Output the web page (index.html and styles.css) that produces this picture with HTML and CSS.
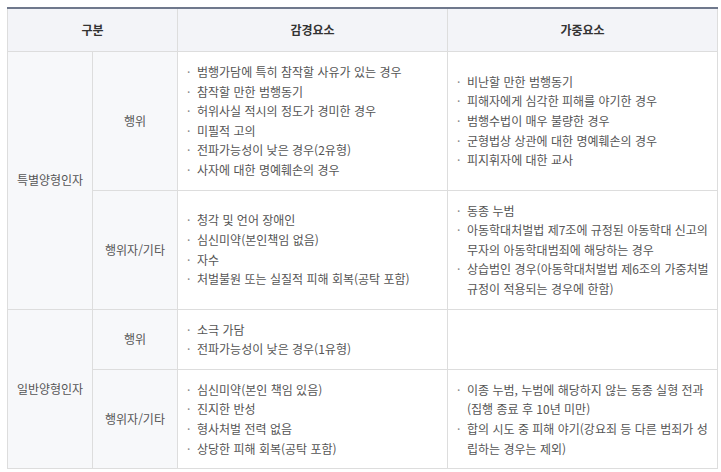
FILE: index.html
```html
<!DOCTYPE html>
<html lang="ko">
<head>
<meta charset="utf-8">
<title>양형인자</title>
<link rel="stylesheet" href="styles.css">
</head>
<body>
<table class="factors">
  <colgroup>
    <col class="c-group">
    <col class="c-type">
    <col class="c-mit">
    <col class="c-agg">
  </colgroup>
  <thead>
    <tr>
      <th colspan="2">구분</th>
      <th>감경요소</th>
      <th>가중요소</th>
    </tr>
  </thead>
  <tbody>
    <tr>
      <td class="label" rowspan="2">특별양형인자</td>
      <td class="label">행위</td>
      <td>
        <ul class="items">
          <li>범행가담에 특히 참작할 사유가 있는 경우</li>
          <li>참작할 만한 범행동기</li>
          <li>허위사실 적시의 정도가 경미한 경우</li>
          <li>미필적 고의</li>
          <li>전파가능성이 낮은 경우(2유형)</li>
          <li>사자에 대한 명예훼손의 경우</li>
        </ul>
      </td>
      <td>
        <ul class="items">
          <li>비난할 만한 범행동기</li>
          <li>피해자에게 심각한 피해를 야기한 경우</li>
          <li>범행수법이 매우 불량한 경우</li>
          <li>군형법상 상관에 대한 명예훼손의 경우</li>
          <li>피지휘자에 대한 교사</li>
        </ul>
      </td>
    </tr>
    <tr>
      <td class="label">행위자/기타</td>
      <td>
        <ul class="items">
          <li>청각 및 언어 장애인</li>
          <li>심신미약(본인책임 없음)</li>
          <li>자수</li>
          <li>처벌불원 또는 실질적 피해 회복(공탁 포함)</li>
        </ul>
      </td>
      <td>
        <ul class="items">
          <li>동종 누범</li>
          <li>아동학대처벌법 제7조에 규정된 아동학대 신고의<br>무자의 아동학대범죄에 해당하는 경우</li>
          <li>상습범인 경우(아동학대처벌법 제6조의 가중처벌<br>규정이 적용되는 경우에 한함)</li>
        </ul>
      </td>
    </tr>
    <tr>
      <td class="label" rowspan="2">일반양형인자</td>
      <td class="label">행위</td>
      <td>
        <ul class="items">
          <li>소극 가담</li>
          <li>전파가능성이 낮은 경우(1유형)</li>
        </ul>
      </td>
      <td></td>
    </tr>
    <tr>
      <td class="label">행위자/기타</td>
      <td>
        <ul class="items">
          <li>심신미약(본인 책임 있음)</li>
          <li>진지한 반성</li>
          <li>형사처벌 전력 없음</li>
          <li>상당한 피해 회복(공탁 포함)</li>
        </ul>
      </td>
      <td>
        <ul class="items">
          <li>이종 누범, 누범에 해당하지 않는 동종 실형 전과<br>(집행 종료 후 10년 미만)</li>
          <li>합의 시도 중 피해 야기(강요죄 등 다른 범죄가 성<br>립하는 경우는 제외)</li>
        </ul>
      </td>
    </tr>
  </tbody>
</table>
</body>
</html>
```

FILE: styles.css
```css
html, body {
  margin: 0;
  padding: 0;
  background: #ffffff;
}

body {
  padding: 7px 0 0 7px;
  font-family: "Noto Sans CJK KR", "Noto Sans", sans-serif;
  font-size: 12px;
  color: #555555;
}

.factors {
  border-collapse: collapse;
  table-layout: fixed;
  width: 710px;
  border-top: 2px solid #6f788c;
}

.c-group { width: 85px; }
.c-type { width: 85px; }
.c-mit { width: 270px; }
.c-agg { width: 270px; }

.factors th,
.factors td {
  border: 1px solid #dddddd;
  vertical-align: middle;
}

.factors th {
  height: 42px;
  padding: 0;
  background: #f3f4f8;
  color: #333333;
  font-weight: bold;
  text-align: center;
  line-height: 19.6px;
}

.factors td {
  padding: 10px 2px 10px 10px;
  line-height: 19.6px;
  text-align: left;
}

.factors td.label {
  padding: 10px 2px;
  background: #f7f8fa;
  text-align: center;
  color: #555555;
}

.items {
  list-style: none;
  margin: 0;
  padding: 0;
}

.items li {
  position: relative;
  padding-left: 9px;
  white-space: nowrap;
}

.items li::before {
  content: "·";
  position: absolute;
  left: -1px;
  top: 0;
  color: #888888;
}
```
